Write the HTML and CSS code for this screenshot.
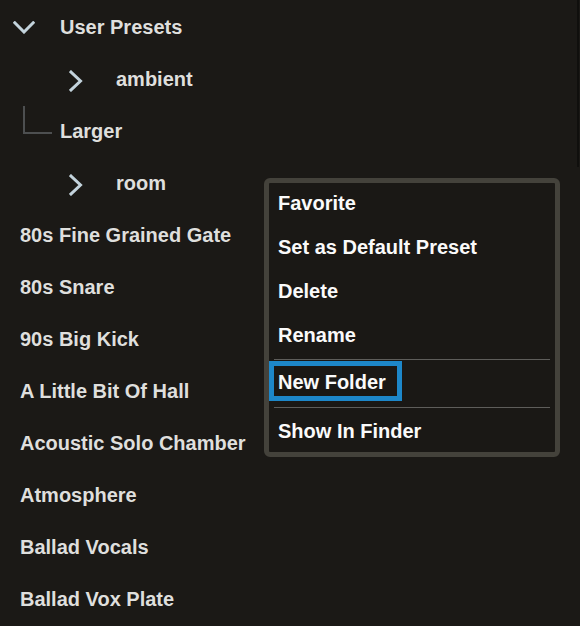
FILE: index.html
```html
<!DOCTYPE html>
<html>
<head>
<meta charset="utf-8">
<link rel="stylesheet" href="styles.css">
</head>
<body>
<div class="list">
  <div class="row folder">
    <svg class="chev-down" width="22" height="13" viewBox="0 0 22 13"><polyline points="1.8,1.8 11,11 20.2,1.8" fill="none" stroke="#c3d3dc" stroke-width="3" stroke-linecap="square"/></svg>
    <span class="label l-top">User Presets</span>
  </div>
  <div class="row sub">
    <svg class="chev-right" width="14" height="22" viewBox="0 0 14 22"><polyline points="2,2 11.5,11 2,20" fill="none" stroke="#c3d3dc" stroke-width="3" stroke-linecap="square"/></svg>
    <span class="label l-sub">ambient</span>
  </div>
  <div class="row tree">
    <span class="elbow"></span>
    <span class="label l-tree">Larger</span>
  </div>
  <div class="row sub">
    <svg class="chev-right" width="14" height="22" viewBox="0 0 14 22"><polyline points="2,2 11.5,11 2,20" fill="none" stroke="#c3d3dc" stroke-width="3" stroke-linecap="square"/></svg>
    <span class="label l-sub">room</span>
  </div>
  <div class="row item"><span class="label">80s Fine Grained Gate</span></div>
  <div class="row item"><span class="label">80s Snare</span></div>
  <div class="row item"><span class="label">90s Big Kick</span></div>
  <div class="row item"><span class="label">A Little Bit Of Hall</span></div>
  <div class="row item"><span class="label">Acoustic Solo Chamber</span></div>
  <div class="row item"><span class="label">Atmosphere</span></div>
  <div class="row item"><span class="label">Ballad Vocals</span></div>
  <div class="row item"><span class="label">Ballad Vox Plate</span></div>
</div>

<div class="scrollbar"></div>

<div class="menu">
  <div class="mi">Favorite</div>
  <div class="mi">Set as Default Preset</div>
  <div class="mi">Delete</div>
  <div class="mi">Rename</div>
  <div class="sep"></div>
  <div class="mi focused">New Folder</div>
  <div class="sep sep2"></div>
  <div class="mi last">Show In Finder</div>
</div>
</body>
</html>
```

FILE: styles.css
```css
html, body {
  margin: 0;
  padding: 0;
  background: #1b1916;
  width: 580px;
  height: 626px;
  overflow: hidden;
}

body {
  position: relative;
  font-family: "Liberation Sans", Arial, sans-serif;
  font-weight: bold;
  font-size: 20px;
  color: #dfdfdd;
}

.list {
  padding-top: 1px;
}

.row {
  display: flex;
  align-items: flex-start;
  height: 52px;
}

.label {
  line-height: 52px;
  white-space: nowrap;
}

.folder {
  padding-left: 13px;
}

.chev-down {
  margin-top: 20px;
  flex: none;
}

.l-top {
  margin-left: 25px;
}

.sub {
  padding-left: 69px;
}

.chev-right {
  margin-top: 17px;
  flex: none;
}

.l-sub {
  margin-left: 33px;
}

.tree {
  padding-left: 23px;
}

.elbow {
  flex: none;
  box-sizing: border-box;
  width: 29px;
  height: 28px;
  margin-top: 1px;
  border-left: 2px solid #4d4f50;
  border-bottom: 2px solid #4d4f50;
}

.l-tree {
  margin-left: 8px;
}

.item {
  padding-left: 20px;
}

.scrollbar {
  position: absolute;
  left: 577px;
  top: 0;
  width: 2px;
  height: 167px;
  background: #100f0d;
}

.menu {
  position: absolute;
  left: 264px;
  top: 178px;
  width: 296px;
  box-sizing: border-box;
  border: 5px solid #44423b;
  border-radius: 6px;
  background: #1a1815;
  color: #fafafa;
}

.mi {
  height: 44px;
  line-height: 40px;
  padding-left: 9px;
  white-space: nowrap;
}

.sep {
  height: 1px;
  margin: 0 5px;
  background: #5e5d5a;
}

.focused {
  box-sizing: border-box;
  width: 133px;
  height: 40px;
  margin-top: 1px;
  line-height: 32px;
  padding-left: 4px;
  border: 5px solid #1d87c9;
}

.sep2 {
  margin-top: 6px;
}

.last {
  margin-top: 3px;
  height: 41px;
}
```
